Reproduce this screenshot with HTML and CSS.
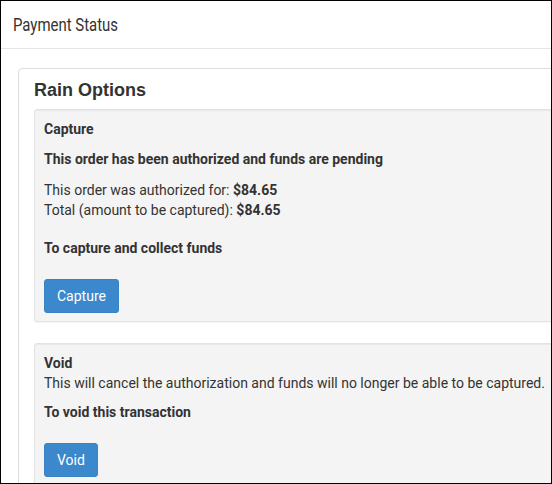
FILE: index.html
```html
<!DOCTYPE html>
<html>
<head>
<meta charset="utf-8">
<link rel="stylesheet" href="styles.css">
</head>
<body>
<div class="frame">
  <div class="page-header">
    <h1 class="page-title">Payment Status</h1>
  </div>
  <div class="content">
    <div class="panel">
      <h2 class="panel-title">Rain Options</h2>
      <div class="well well-capture">
        <div class="well-title">Capture</div>
        <div class="lead-line">This order has been authorized and funds are pending</div>
        <div class="amounts">
          <div>This order was authorized for: <b>$84.65</b></div>
          <div>Total (amount to be captured): <b>$84.65</b></div>
        </div>
        <div class="action-line">To capture and collect funds</div>
        <button class="btn">Capture</button>
      </div>
      <div class="well well-void">
        <div class="well-title">Void</div>
        <div>This will cancel the authorization and funds will no longer be able to be captured.</div>
        <div class="action-line-void">To void this transaction</div>
        <button class="btn">Void</button>
      </div>
    </div>
  </div>
</div>
</body>
</html>
```

FILE: styles.css
```css
html, body {
  margin: 0;
  padding: 0;
  background: #fff;
}
.frame {
  width: 552px;
  height: 484px;
  box-sizing: border-box;
  border: 1px solid #000;
  overflow: hidden;
  font-family: Roboto, "Liberation Sans", sans-serif;
  font-size: 14px;
  line-height: 20px;
  color: #333;
  background: #fff;
}
.page-header {
  height: 48px;
  border-bottom: 1px solid #e5e5e5;
  box-sizing: border-box;
  padding: 13px 0 0 12px;
}
.page-title {
  display: inline-block;
  margin: 0;
  font-size: 18px;
  font-weight: 400;
  line-height: 22px;
  color: #333;
  transform: scaleX(0.83);
  transform-origin: left center;
}
.content {
  padding: 19px 0 0 17px;
}
.panel {
  width: 600px;
  border: 1px solid #ddd;
  border-radius: 4px;
  padding: 11px 15px 20px 15px;
  background: #fff;
}
.panel-title {
  margin: 0 0 9px 0;
  font-family: "Liberation Sans", Arial, sans-serif;
  font-size: 18px;
  line-height: 20px;
  font-weight: 700;
  color: #333;
}
.well {
  background: #f4f4f4;
  border: 1px solid #e3e3e3;
  border-radius: 3px;
  box-shadow: inset 0 1px 1px rgba(0,0,0,0.05), 0 1px 1px rgba(0,0,0,0.04);
  padding: 9px 9px 8px 9px;
  margin-bottom: 21px;
}
.well-title {
  font-weight: 700;
}
.lead-line {
  font-weight: 700;
  margin-top: 10px;
}
.amounts {
  margin-top: 11px;
}
.action-line {
  font-weight: 700;
  margin-top: 18px;
}
.action-line-void {
  font-weight: 700;
  margin-top: 9px;
}
.btn {
  display: block;
  margin-top: 21px;
  height: 34px;
  padding: 0 12px;
  font-family: Roboto, "Liberation Sans", sans-serif;
  font-size: 14px;
  line-height: 32px;
  color: #fff;
  background: #3c88cc;
  border: 1px solid #3a82c4;
  border-radius: 3px;
}
```
